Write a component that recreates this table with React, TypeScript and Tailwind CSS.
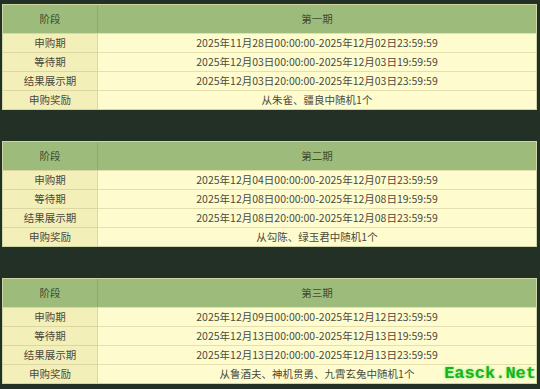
import React from 'react';

const periods = [
  {
    title: '第一期',
    rows: [
      ['申购期', '2025年11月28日00:00:00-2025年12月02日23:59:59'],
      ['等待期', '2025年12月03日00:00:00-2025年12月03日19:59:59'],
      ['结果展示期', '2025年12月03日20:00:00-2025年12月03日23:59:59'],
      ['申购奖励', '从朱雀、疆良中随机1个'],
    ],
  },
  {
    title: '第二期',
    rows: [
      ['申购期', '2025年12月04日00:00:00-2025年12月07日23:59:59'],
      ['等待期', '2025年12月08日00:00:00-2025年12月08日19:59:59'],
      ['结果展示期', '2025年12月08日20:00:00-2025年12月08日23:59:59'],
      ['申购奖励', '从勾陈、绿玉君中随机1个'],
    ],
  },
  {
    title: '第三期',
    rows: [
      ['申购期', '2025年12月09日00:00:00-2025年12月12日23:59:59'],
      ['等待期', '2025年12月13日00:00:00-2025年12月13日19:59:59'],
      ['结果展示期', '2025年12月13日20:00:00-2025年12月13日23:59:59'],
      ['申购奖励', '从鲁酒夫、神机贯勇、九霄玄兔中随机1个'],
    ],
  },
];

function PeriodTable({ title, rows }: { title: string; rows: string[][] }) {
  return (
    <div className="grid grid-cols-[95px_1fr] border border-[#cfd6a4] bg-[#fdfbcc]">
      <div className="h-[28px] flex items-center justify-center bg-[#9dbb7b] border-r border-[#8eab6d] text-[#3f4d2e]">
        阶段
      </div>
      <div className="h-[28px] flex items-center justify-center bg-[#9dbb7b] text-[#3f4d2e]">
        {title}
      </div>
      {rows.map(([label, value]) => (
        <React.Fragment key={label}>
          <div className="h-[19px] flex items-center justify-center bg-[#f3efb9] border-t border-r border-[#ddd6a2] text-[#4b4a3c]">
            {label}
          </div>
          <div className="h-[19px] flex items-center justify-center bg-[#fefccf] border-t border-[#e4dfad] text-[#4b4a3c]">
            {value}
          </div>
        </React.Fragment>
      ))}
    </div>
  );
}

export default function App() {
  return (
    <div
      className="relative w-[540px] h-[389px] bg-[#223026] pt-[4px] pl-[2px] pr-[3px] text-[10.5px] leading-none"
      style={{ fontFamily: '"Noto Sans CJK SC", "Noto Sans", sans-serif' }}
    >
      <div className="flex flex-col gap-[31px]">
        {periods.map((p) => (
          <PeriodTable key={p.title} title={p.title} rows={p.rows} />
        ))}
      </div>
      {/* watermark */}
      <div
        className="absolute right-[4px] bottom-[7px] text-[17px] font-bold text-[#15b515] leading-none"
        style={{ fontFamily: '"Liberation Mono", monospace', textShadow: '0 0 3px #7fe27f' }}
      >
        Easck.Net
      </div>
    </div>
  );
}
